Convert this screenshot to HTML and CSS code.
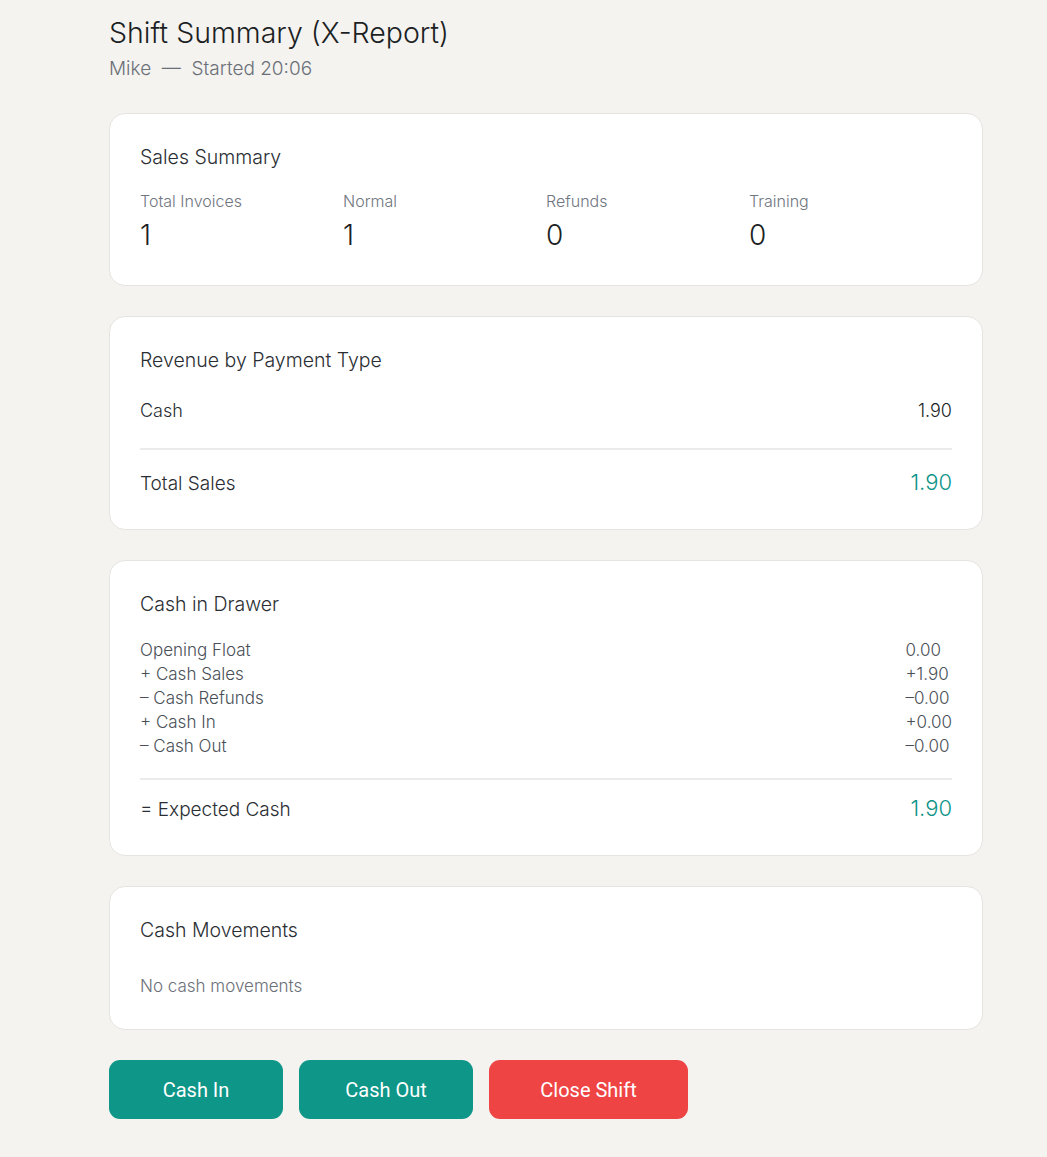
FILE: index.html
```html
<!DOCTYPE html>
<html lang="en">
<head>
<meta charset="utf-8">
<title>Shift Summary</title>
<link rel="stylesheet" href="styles.css">
</head>
<body>
<main class="page">
  <header class="head">
    <h1 class="title">Shift Summary (X-Report)</h1>
    <p class="subtitle">Mike &nbsp;—&nbsp; Started 20:06</p>
  </header>

  <section class="card">
    <h2 class="card-title">Sales Summary</h2>
    <div class="stats">
      <div class="stat"><div class="stat-label">Total Invoices</div><div class="stat-value">1</div></div>
      <div class="stat"><div class="stat-label">Normal</div><div class="stat-value">1</div></div>
      <div class="stat"><div class="stat-label">Refunds</div><div class="stat-value">0</div></div>
      <div class="stat"><div class="stat-label">Training</div><div class="stat-value">0</div></div>
    </div>
  </section>

  <section class="card">
    <h2 class="card-title">Revenue by Payment Type</h2>
    <div class="pay-row"><span>Cash</span><span class="num">1.90</span></div>
    <div class="divider"></div>
    <div class="total-row"><span>Total Sales</span><span class="total-num">1.90</span></div>
  </section>

  <section class="card">
    <h2 class="card-title">Cash in Drawer</h2>
    <div class="lines">
      <span>Opening Float</span><span>0.00</span>
      <span>+ Cash Sales</span><span>+1.90</span>
      <span>– Cash Refunds</span><span>–0.00</span>
      <span>+ Cash In</span><span>+0.00</span>
      <span>– Cash Out</span><span>–0.00</span>
    </div>
    <div class="divider drawer-div"></div>
    <div class="total-row"><span>= Expected Cash</span><span class="total-num">1.90</span></div>
  </section>

  <section class="card">
    <h2 class="card-title">Cash Movements</h2>
    <p class="empty">No cash movements</p>
  </section>

  <div class="actions">
    <button class="btn btn-teal">Cash In</button>
    <button class="btn btn-teal">Cash Out</button>
    <button class="btn btn-red">Close Shift</button>
  </div>
</main>
</body>
</html>
```
FILE: styles.css
```css
* { box-sizing: border-box; }
html, body { margin: 0; padding: 0; }
body {
  background: #f4f3f0;
  font-family: "Inter", "Liberation Sans", sans-serif;
  font-weight: 300;
  color: #1f2328;
}
.page {
  width: 874px;
  margin-left: 109px;
  padding: 14px 0 38px;
}
.head { margin-bottom: 27px; }
.title {
  margin: 0;
  font-size: 28.5px;
  font-weight: 300;
  line-height: 38px;
  color: #1c1f24;
}
.subtitle {
  margin: 0;
  font-size: 19px;
  line-height: 34px;
  color: #6b7078;
}
.card {
  background: #fff;
  border: 1px solid #e6e4e0;
  border-radius: 16px;
  padding: 30px 30px 30px;
  margin-bottom: 30px;
}
.card-title {
  margin: 0 0 21px;
  font-size: 19.5px;
  font-weight: 300;
  line-height: 26px;
  color: #2a2e33;
}
.stats {
  display: grid;
  grid-template-columns: repeat(4, 1fr);
}
.stat-label {
  font-size: 16px;
  line-height: 20px;
  color: #707680;
}
.stat-value {
  font-size: 28px;
  line-height: 40px;
  margin-top: 4px;
  color: #1c1f24;
}
.pay-row, .total-row {
  display: flex;
  justify-content: space-between;
  align-items: baseline;
}
.pay-row {
  font-size: 18px;
  line-height: 26px;
  color: #2a2e33;
}
.card-title + .pay-row { margin-top: 25px; }
.num { color: #1c1f24; }
.divider {
  height: 2px;
  background: #ebebeb;
  margin: 24px 0 17px;
}
.total-row {
  font-size: 19px;
  line-height: 30px;
  color: #2a2e33;
}
.total-num {
  font-size: 22px;
  color: #0d9488;
}
.lines {
  display: grid;
  grid-template-columns: 1fr auto;
  font-size: 17px;
  line-height: 24px;
  color: #4a4f57;
}
.drawer-div { margin: 20px 0 13px; }
.empty {
  margin: 32px 0 2px;
  font-size: 17px;
  line-height: 22px;
  color: #6b7078;
}
.actions {
  display: flex;
  gap: 16px;
}
.btn {
  border: 0;
  height: 59px;
  border-radius: 11px;
  font-family: "Roboto", "Liberation Sans", sans-serif;
  font-size: 20px;
  font-weight: 400;
  color: #fff;
  padding: 0;
  cursor: pointer;
}
.btn-teal { background: #0e9688; width: 174px; }
.btn-red { background: #ef4444; width: 199px; }
```
